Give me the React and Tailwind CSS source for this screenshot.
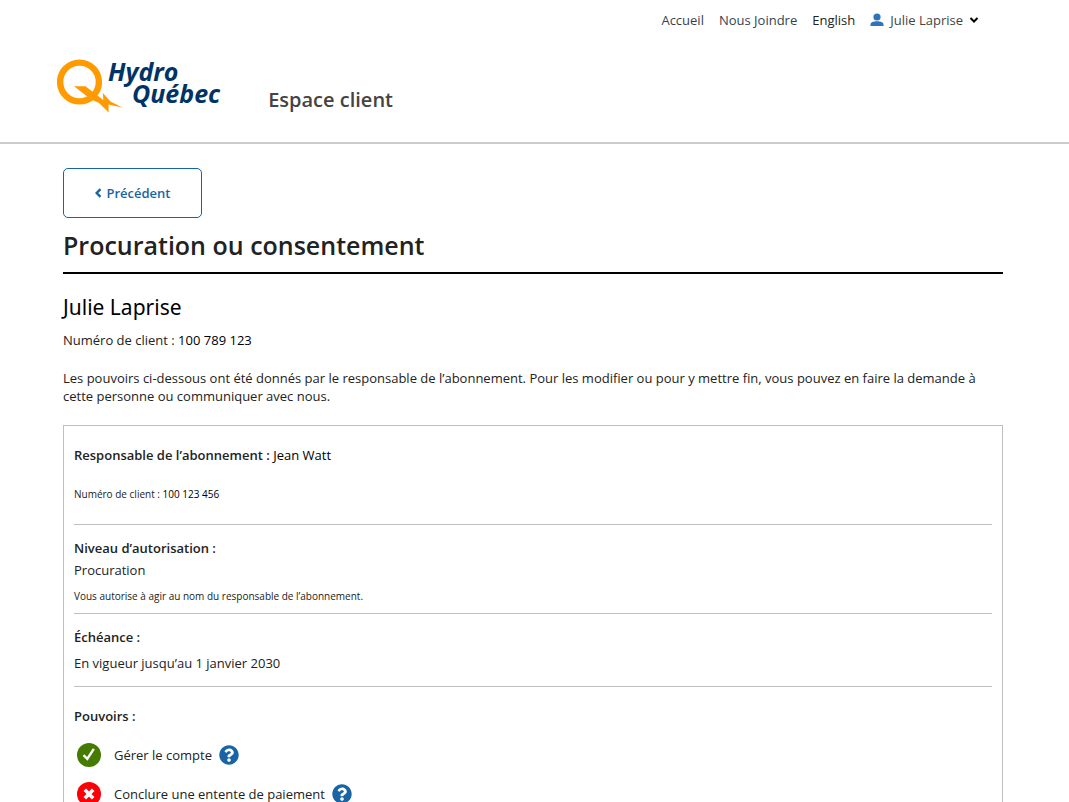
import { FaQuestionCircle } from 'react-icons/fa';

const powers = [
  { id: 'compte', label: 'Gérer le compte', granted: true },
  { id: 'entente', label: 'Conclure une entente de paiement', granted: false }
];

const Logo = () => (
  <a href="#accueil" aria-label="Hydro-Québec" className="flex items-start text-[#003366]">
    <svg width="67" height="54" viewBox="0 0 67 54" fill="none" className="-mr-4 shrink-0">
      <circle cx="22.5" cy="23" r="19.4" stroke="#ff9b00" strokeWidth="6.4" />
      <path d="M17 27.300h11.500L46.300 41l-.4-7L53.500 42.400 65.500 48.600 51.500 45.500l.2 8L42 44 33.500 40z" fill="#ff9b00" />
    </svg>
    <span className="flex flex-col pt-px text-[25px] leading-[22px] font-bold italic">
      <span>Hydro</span>
      <span className="pl-6">Québec</span>
    </span>
  </a>
);

const Header = () => (
  <header className="border-b-2 border-[#cccccc] pr-[90px] pb-[29px] pl-[57px]">
    <nav className="flex h-10 items-center justify-end gap-[15px] text-[#333f55]">
      <a href="#accueil">Accueil</a>
      <a href="#joindre">Nous Joindre</a>
      <a href="#english" className="text-[#222222]">English</a>
      <button type="button" className="flex items-center gap-1.5 text-[#444444]">
        <svg width="14" height="14" viewBox="0 0 14 14" fill="#2f73b9">
          <circle cx="7" cy="4" r="3.600" />
          <path d="M.5 13v-1.500C.5 9.500 3.500 8.300 7 8.300s6.500 1.200 6.500 3.200V13z" />
        </svg>
        Julie Laprise
        <svg width="10" height="8" viewBox="0 0 10 8" fill="none" stroke="#000000" strokeWidth="2">
          <path d="M1.500 2 5 5.500 8.500 2" />
        </svg>
      </button>
    </nav>
    <div className="flex items-end gap-12 pt-[19px]">
      <Logo />
      <p className="pb-px text-[20px] leading-6 font-semibold text-[#444444]">Espace client</p>
    </div>
  </header>
);

const PowerItem = ({ label, granted }) => (
  <li className="flex h-6 items-center">
    <span
      className={
        granted
          ? 'mx-[3px] flex size-6 items-center justify-center rounded-full bg-[#457b00]'
          : 'mx-[3px] flex size-6 items-center justify-center rounded-full bg-[#fb0007]'
      }
    >
      {granted ? (
        <svg width="24" height="24" viewBox="0 0 24 24" fill="none" stroke="#ffffff" strokeWidth="2.400">
          <path d="M6.500 12.200 10.300 15.800 16.800 5.800" />
        </svg>
      ) : (
        <svg width="24" height="24" viewBox="0 0 24 24" fill="none" stroke="#ffffff" strokeWidth="3.600">
          <path d="M7.800 7.800 16.200 16.200M16.200 7.800 7.800 16.200" />
        </svg>
      )}
    </span>
    <span className="ml-[10px]">{label}</span>
    <button type="button" aria-label={`Aide : ${label}`} className="ml-[7px]">
      <FaQuestionCircle className="size-5 text-[#1864a5]" />
    </button>
  </li>
);

const App = () => {
  return (
    <div className="bg-white font-['Open_Sans',sans-serif] text-[13px] leading-[18px] text-[#222222]">
      <Header />

      <main className="pt-6 pr-[66px] pl-[63px]">
        <button
          type="button"
          className="flex h-[50px] w-[139px] items-center justify-center gap-1 rounded-[5px] border border-[#1864a5] font-semibold text-[#1864a5]"
        >
          <svg width="8" height="10" viewBox="0 0 8 10" fill="none" stroke="currentColor" strokeWidth="2.400">
            <path d="M6.500 1.200 2.700 5 6.500 8.800" />
          </svg>
          Précédent
        </button>

        <h1 className="border-b-2 border-black pt-[11px] pb-[11px] text-[25px] leading-8 font-semibold">
          Procuration ou consentement
        </h1>

        <h2 className="pt-[21px] font-['Noto_Sans',sans-serif] text-[21px] leading-6 text-black">Julie Laprise</h2>
        <p className="pt-3">
          Numéro de client : <span className="text-black">100 789 123</span>
        </p>
        <p className="pt-5">
          Les pouvoirs ci-dessous ont été donnés par le responsable de l’abonnement. Pour les modifier ou pour y mettre
          fin, vous pouvez en faire la demande à cette personne ou communiquer avec nous.
        </p>

        <div className="mt-5 border border-[#bfbfbf] px-[10px]">
          <section className="border-b border-[#bfbfbf] pt-5 pb-[21px]">
            <p>
              <strong className="font-semibold">Responsable de l’abonnement :</strong>{' '}
              <span className="text-black">Jean Watt</span>
            </p>
            <p className="pt-[21px] text-[10px]">
              Numéro de client : <span className="text-black">100 123 456</span>
            </p>
          </section>

          <section className="border-b border-[#bfbfbf] pt-[14px] pb-2">
            <h3 className="font-semibold">Niveau d’autorisation :</h3>
            <p className="pt-1">Procuration</p>
            <p className="pt-2 text-[10px]">Vous autorise à agir au nom du responsable de l’abonnement.</p>
          </section>

          <section className="border-b border-[#bfbfbf] pt-[14px] pb-[14px]">
            <h3 className="font-semibold">Échéance :</h3>
            <p className="pt-2">En vigueur jusqu’au 1 janvier 2030</p>
          </section>

          <section className="pt-5 pb-6">
            <h3 className="font-semibold">Pouvoirs :</h3>
            <ul className="flex flex-col gap-[15px] pt-[18px]">
              {powers.map((power) => (
                <PowerItem key={power.id} label={power.label} granted={power.granted} />
              ))}
            </ul>
          </section>
        </div>
      </main>
    </div>
  );
};

export default App;
